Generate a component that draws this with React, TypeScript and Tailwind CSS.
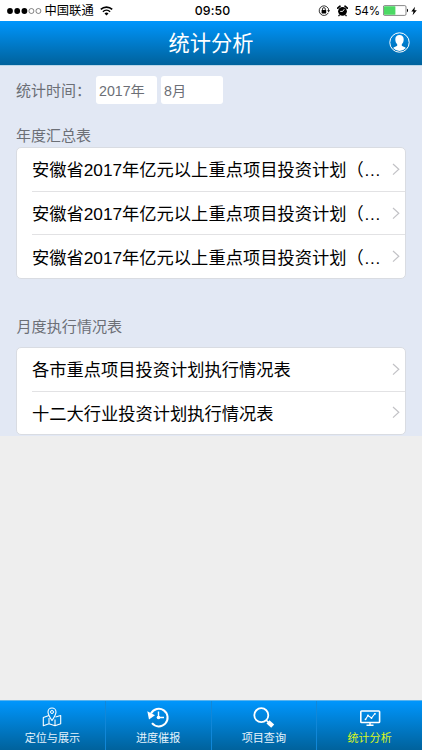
import type { ReactNode } from "react";

const yearly = [
  "安徽省2017年亿元以上重点项目投资计划（…",
  "安徽省2017年亿元以上重点项目投资计划（…",
  "安徽省2017年亿元以上重点项目投资计划（…",
];

const monthly = ["各市重点项目投资计划执行情况表", "十二大行业投资计划执行情况表"];

function StatusBar() {
  return (
    <div className="flex h-[21px] shrink-0 items-center bg-white text-black">
      <div className="flex flex-1 items-center pl-[7px]">
        <svg width="35" height="8" viewBox="0 0 35 8">
          <circle cx="3" cy="4" r="2.9" />
          <circle cx="10.2" cy="4" r="2.9" />
          <circle cx="17.4" cy="4" r="2.9" />
          <circle cx="24.4" cy="4" r="2.5" fill="none" stroke="#333" strokeWidth=".6" />
          <circle cx="31.4" cy="4" r="2.5" fill="none" stroke="#333" strokeWidth=".6" />
        </svg>
        <span className="ml-[2.5px] pt-px text-[12.3px] leading-[20px]">中国联通</span>
        <svg className="ml-[6px]" width="13" height="10" viewBox="0 0 13 10" fill="none" stroke="#000">
          <path d="M.8 3.4a8.2 8.2 0 0 1 11.4 0" strokeWidth="1.6" />
          <path d="M2.9 5.7a5.2 5.2 0 0 1 7.2 0" strokeWidth="1.5" />
          <path d="M6.5 9.6 4.5 7.5a3 3 0 0 1 4 0z" fill="#000" stroke="none" />
        </svg>
      </div>
      <span className="pt-px pl-px font-[Inter] text-[12.3px] leading-[20px] font-medium tracking-[0.1px]">09:50</span>
      <div className="flex flex-1 items-center justify-end pr-[5px]">
        <svg width="12" height="12" viewBox="0 0 12 12">
          <path d="M10.3 7.8A4.8 4.8 0 1 1 10.8 5.6" fill="none" stroke="#000" strokeWidth=".8" />
          <path d="M9.1 5.2h3l-1.5 2z" />
          <rect x="3.6" y="5" width="4.6" height="3.4" rx=".4" />
          <path d="M4.5 5V4a1.4 1.4 0 0 1 2.8 0v1" fill="none" stroke="#000" strokeWidth=".8" />
        </svg>
        <svg className="ml-[7px]" width="11" height="12" viewBox="0 0 11 12">
          <circle cx="5.5" cy="6.3" r="4.4" />
          <path d="M.7 3.2 3 1.2M10.3 3.2 8 1.2" stroke="#000" strokeWidth="1.7" strokeLinecap="round" />
          <path d="M2.5 10 1.5 11.2M8.500 10l1 1.200" stroke="#000" strokeWidth="1.2" />
          <path d="M7.3 4.2 5.6 6.4H3.2" fill="none" stroke="#fff" strokeWidth=".9" />
        </svg>
        <span className="ml-[6px] pt-px font-[Inter] text-[11.6px] leading-[20px] tracking-[-0.1px]">54%</span>
        <svg className="ml-[3px]" width="26" height="11" viewBox="0 0 26 11">
          <rect x=".4" y=".6" width="22.6" height="9.8" rx="1.3" fill="#fff" stroke="#555" strokeWidth=".7" />
          <rect x="1" y="1.2" width="11.4" height="8.6" rx=".5" fill="#4cd964" />
          <path d="M24 3.800v3.400c1.400-.3 1.400-3.100 0-3.400z" />
        </svg>
        <svg className="ml-[2px]" width="6" height="10" viewBox="0 0 6 10">
          <path d="M4 .8.3 5.5h2.2L1.6 9.2 5.8 4.3H3.4z" />
        </svg>
      </div>
    </div>
  );
}

function Card({ items }: { items: string[] }) {
  return (
    <ul className="overflow-hidden rounded-[5px] border border-[#d9dce2] bg-white pl-[15px]">
      {items.map((item, i) => (
        <li
          key={i}
          className="flex h-[43.7px] items-center justify-between border-b border-[#e2e2e4] pr-[5px] last:h-[42.5px] last:border-b-0"
        >
          <span className="pt-[2px] text-[17.25px] leading-[26px] whitespace-nowrap text-black">{item}</span>
          <svg className="shrink-0" width="8" height="13" viewBox="0 0 8 13" fill="none" stroke="#c2c2c6" strokeWidth="1.2">
            <path d="m1 1 5.800 5.200L1 11.600" />
          </svg>
        </li>
      ))}
    </ul>
  );
}

function Tab({ label, active, children }: { label: string; active?: boolean; children: ReactNode }) {
  return (
    <div className="flex flex-1 flex-col items-center border-r border-[#1187d8] pt-[5px] text-white last:border-r-0">
      <svg width="22" height="22" viewBox="0 0 22 22" fill="none" stroke="currentColor">
        {children}
      </svg>
      <span className={`mt-[2px] text-[11.1px] leading-[17px] ${active ? "text-[#d9f51c]" : "text-[#e6f3fc]"}`}>
        {label}
      </span>
    </div>
  );
}

export default function App() {
  return (
    <div className="flex h-[750px] w-[422px] flex-col overflow-hidden bg-[#eeeeee] font-['Liberation_Sans','Noto_Sans_CJK_SC',sans-serif]">
      <StatusBar />

      {/* Header */}
      <header className="flex h-[45px] shrink-0 items-center justify-between border-b border-[#b9d6e8] bg-linear-to-b from-[#0096fd] to-[#00629c] px-[12px]">
        <span className="w-[21px]" />
        <h1 className="pt-[2px] text-[21.2px] leading-[30px] text-white">统计分析</h1>
        <svg className="-mt-[2px]" width="21" height="21" viewBox="0 0 21 21">
          <circle cx="10.5" cy="10.5" r="9.7" fill="none" stroke="#fff" strokeWidth="1" />
          <path
            d="M10.5 3c2.700 0 4.200 1.600 4.200 4.300 0 2.200-.7 3.800-1.900 5v1.400c1 .9 2.900 1 4.100 2.300a8.500 8.500 0 0 1-12.800 0c1.200-1.300 3.100-1.400 4.100-2.300v-1.400C7 11.100 6.300 9.500 6.300 7.300 6.300 4.600 7.800 3 10.500 3z"
            fill="#fff"
          />
        </svg>
      </header>

      {/* Reports */}
      <main className="h-[370px] shrink-0 bg-[#e2e8f4] px-[16px] text-[15px] text-[#6c6f76]">
        <div className="flex items-center pt-[10px]">
          <span className="w-[80px] pt-[2px] leading-[26px] whitespace-nowrap">统计时间：</span>
          <span className="h-[28px] w-[61px] rounded-[3px] bg-white pl-[3px] text-[14.2px] leading-[30px]">2017年</span>
          <span className="ml-[4px] h-[28px] w-[62px] rounded-[3px] bg-white pl-[3px] text-[14.2px] leading-[30px]">8月</span>
        </div>
        <h2 className="mt-[21px] leading-[22px]">年度汇总表</h2>
        <Card items={yearly} />
        <h2 className="mt-[37px] mb-[9px] pl-[0.5px] text-[15.1px] leading-[22px]">月度执行情况表</h2>
        <Card items={monthly} />
      </main>

      {/* Bottom tabs */}
      <nav className="mt-auto flex h-[50px] shrink-0 border-t border-[#5bb4ee] bg-linear-to-b from-[#0096fd] to-[#00629c]">
        <Tab label="定位与展示">
          <path
            d="M8 9.500 2.300 11.500v8.300L8 17.800l6 2 5.700-2v-8.300L14.500 11M8 12v5.800M14 13.500v6.300M11 14.500C9 11.500 7 8.800 7 6a4 4 0 0 1 8 0c0 2.800-2 5.500-4 8.500z"
            strokeWidth="1.1"
            strokeLinejoin="round"
          />
          <circle cx="11" cy="6" r="1.5" strokeWidth="1" />
        </Tab>
        <Tab label="进度催报">
          <path d="M4 7.500A8.800 8.800 0 1 1 5 17.200" strokeWidth="2" />
          <path d="M.3 5.300 8 9.200 2 13.500z" fill="currentColor" stroke="none" />
          <path d="M11.500 5.500V11.500H17" strokeWidth="1.4" />
          <circle cx="11.5" cy="11.5" r="1.8" fill="currentColor" stroke="none" />
        </Tab>
        <Tab label="项目查询">
          <circle cx="8.3" cy="9.2" r="7" strokeWidth="1.8" />
          <path d="m13.300 14.200 2 2" strokeWidth="1.6" />
          <path d="m15 15.800 4.700 4.400" strokeWidth="4.4" />
        </Tab>
        <Tab label="统计分析" active>
          <rect x="1.8" y="5" width="18.8" height="11.5" rx=".8" strokeWidth="1.6" />
          <path d="M11 16.500V19M7.500 19.200h7" strokeWidth="1.5" />
          <path d="m6.500 13.500 2.500-4 3.500 2.500 3.500-4.500" strokeWidth="1.1" />
          <circle cx="6.5" cy="13.3" r=".9" fill="currentColor" stroke="none" />
          <circle cx="9" cy="9.5" r=".9" fill="currentColor" stroke="none" />
          <circle cx="12.5" cy="12" r=".9" fill="currentColor" stroke="none" />
          <circle cx="16" cy="7.8" r=".9" fill="currentColor" stroke="none" />
        </Tab>
      </nav>
    </div>
  );
}
